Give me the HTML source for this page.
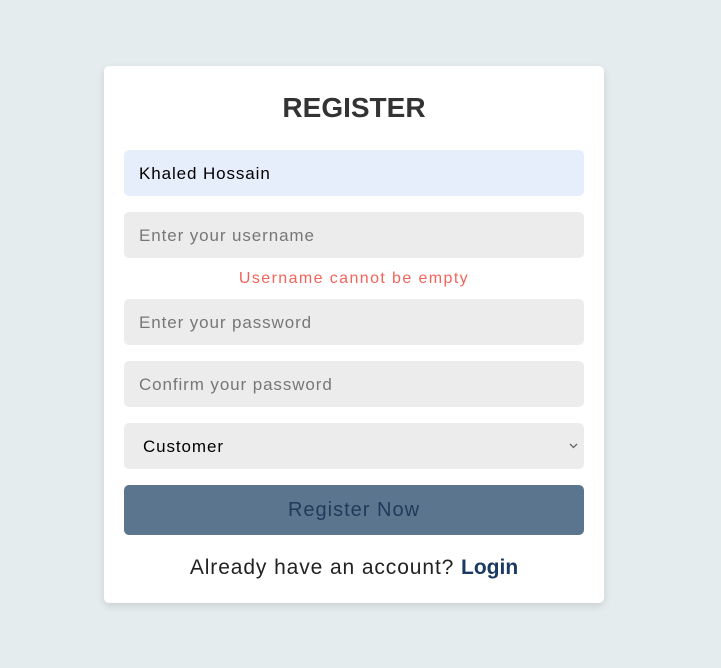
<!DOCTYPE html>
<html><head><style>
body{margin:0;width:721px;height:668px;background:#e4ecee;font-family:"Liberation Sans",sans-serif;position:relative;overflow:hidden}
.card{position:absolute;left:104px;top:66px;width:500px;height:537px;background:#fff;border-radius:5px;box-shadow:0 3px 8px rgba(0,0,0,.12)}
.t{position:absolute;left:0;width:100%;text-align:center;top:26px;font-size:28px;font-weight:bold;color:#333;letter-spacing:0}
.f{position:absolute;left:20px;width:460px;height:46px;border-radius:5px;background:#ececec;box-sizing:border-box;padding-left:15px;line-height:47px;font-size:17px;color:#777;letter-spacing:.9px}
.err{position:absolute;left:0;width:100%;text-align:center;top:204px;font-size:16px;color:#f2645a;letter-spacing:1.4px}
.btn{position:absolute;left:20px;top:419px;width:460px;height:50px;border-radius:5px;background:#5c758f;color:#23395a;font-size:20px;text-align:center;line-height:51px;letter-spacing:1px}
.ft{position:absolute;left:0;width:100%;text-align:center;top:490px;font-size:21px;color:#222;letter-spacing:.9px}
.ft b{color:#1b3a63;letter-spacing:0}
</style></head><body>
<div class="card">
<div class="t">REGISTER</div>
<div class="f" style="top:84px;background:#e7eefb;color:#000">Khaled Hossain</div>
<div class="f" style="top:146px">Enter your username</div>
<div class="err">Username cannot be empty</div>
<div class="f" style="top:233px">Enter your password</div>
<div class="f" style="top:295px">Confirm your password</div>
<div class="f" style="top:357px;color:#000;padding-left:19px">Customer
<svg style="position:absolute;right:6px;top:20px" width="9" height="6" viewBox="0 0 9 6"><path d="M1 1l3.5 3.5L8 1" stroke="#666" stroke-width="1.3" fill="none"/></svg></div>
<div class="btn">Register Now</div>
<div class="ft">Already have an account? <b>Login</b></div>
</div>
</body></html>
